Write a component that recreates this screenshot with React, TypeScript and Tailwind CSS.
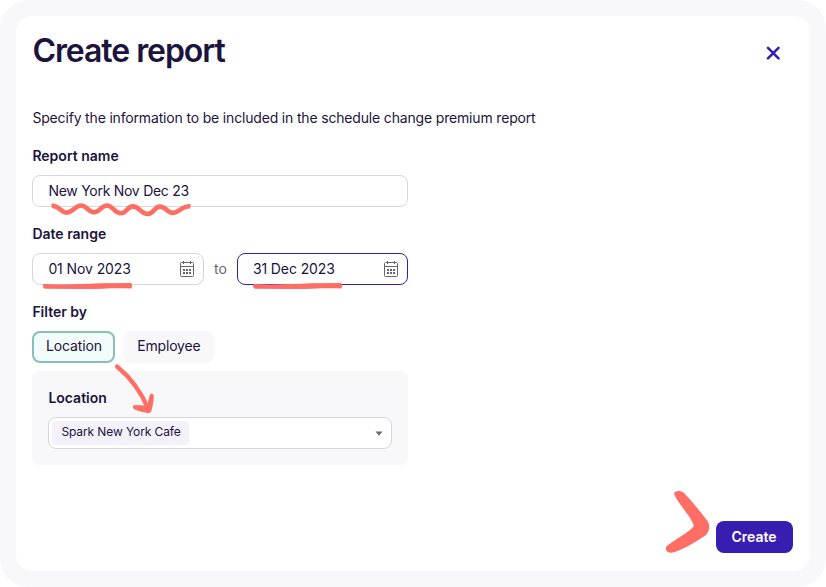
import React from 'react';

interface DateFieldProps {
  value: string;
  active?: boolean;
}

const CalendarIcon: React.FC = () => (
  <svg width="16" height="18" viewBox="0 0 16 18" fill="none" stroke="#66666f" className="mr-2">
    <rect x="1.5" y="2.5" width="13" height="14" rx="1" />
    <path d="M1.5 6.5h13M4.5 1v3M11.5 1v3" />
    <path d="M4 10h2M7 10h2M10 10h2M4 13h2M7 13h2M10 13h2" strokeWidth="2" />
  </svg>
);

const DateField: React.FC<DateFieldProps> = ({ value, active }) => (
  <div
    className={`flex h-8 w-[171.5px] items-center justify-between rounded-lg border bg-white pl-[15px] ${
      active ? 'border-[#371eb0]' : 'border-[#d6d6dc]'
    }`}
  >
    <span className="tracking-[-0.1px]">{value}</span>
    <CalendarIcon />
  </div>
);

// Hand-drawn marks on top of the form
const Annotations: React.FC = () => (
  <svg
    className="pointer-events-none absolute inset-0"
    width="826"
    height="587"
    viewBox="0 0 826 587"
    fill="none"
    stroke="#ff6e64"
    strokeLinecap="round"
    strokeLinejoin="round"
  >
    <path
      strokeWidth="4.6"
      strokeLinecap="butt"
      d="M51.500 206c7-1.500 9 6.600 15.500 6.600c6 0 8-7.100 14-7.100c6 0 7 6.800 13 6.800c6 0 7-6.800 13-6.800c6 0 7 7.700 14 7.700c6 0 6-6.800 12-6.800c6 0 8 7.500 15 7.500c6 0 6-7.300 12-7.300c6 0 7 6.300 13 6.300c6 0 9-7.300 17.500-6.600"
    />
    <path fill="#ff6e64" stroke="none" d="M44 284C60 284.800 80 284.300 100 283.300L131 282.900C132.500 284.300 132.500 287.300 131 288.600C112 287.600 98 289.500 78 289L45 288.700C42.500 287.800 42.500 284.800 44 284Z" />
    <path fill="#ff6e64" stroke="none" d="M254 284C270 284.800 290 284.300 310 283.300L341 282.900C342.500 284.300 342.500 287.300 341 288.600C322 287.600 308 289.500 288 289L255 288.700C252.500 287.800 252.500 284.800 254 284Z" />
    {/* Arrow from the Location tab to the select */}
    <path strokeWidth="4.2" d="M117 366.500c13 10.500 24 25 31.500 43" />
    <path fill="#ff6e64" strokeWidth="1" d="M133.500 406C135 405 140 406 144.500 406L147.500 404.500C149 401 149.500 397 150.500 394.500C151.500 393.500 153 394 153.200 395.500C153.500 401 152 407 150.500 412L148 412.500C143 411.800 137 410.500 134 408.500Z" />
    <path
      fill="#ff6e64"
      stroke="none"
      d="M674.500 495C672.500 490.500 680 490 683.500 492.500C692 501.500 700 511 707.500 521C710 525 710 531 706 535C696 542 685 548.500 674 552.300C669 553.500 665 551.500 666 547.500C668 543 687 534.500 694 526C690 515 680 506 674.500 495Z"
    />
  </svg>
);

export default function App() {
  return (
    <div className="relative flex h-[587px] w-[826px] rounded-[28px] bg-[#f8f8fb] p-4 font-['Inter',sans-serif] text-sm text-[#1c143c]">
      <div className="flex h-[555px] w-[794px] flex-col rounded-2xl bg-white pr-[17.5px] pl-[16.4px] pt-4">
        <div className="flex items-start justify-between">
          <h1 className="mt-px text-[32px] leading-9 font-semibold tracking-[-1.06px]">Create report</h1>
          <button className="mt-3.5 mr-[13px]" aria-label="Close">
            <svg width="14" height="14" viewBox="0 0 14 14" stroke="#371eb0" strokeWidth="2.6" strokeLinecap="round">
              <path d="M2 1.800l10.500 10.500M12.500 1.800L2 12.300" />
            </svg>
          </button>
        </div>

        <p className="mt-[39px] leading-5 tracking-[-0.17px]">
          Specify the information to be included in the schedule change premium report
        </p>

        <div className="w-[376px]">
          <label className="mt-[18px] block leading-5 font-semibold">Report name</label>
          <div className="mt-[9px] flex h-8 items-center rounded-lg border border-[#d6d6dc] pl-[15px] tracking-[-0.27px]">
            New York Nov Dec 23
          </div>

          <label className="mt-[17px] block leading-5 font-semibold">Date range</label>
          <div className="mt-[9px] flex items-center justify-between">
            <DateField value="01 Nov 2023" />
            <span className="text-[#66666f]">to</span>
            <DateField value="31 Dec 2023" active />
          </div>

          <label className="mt-[17px] block leading-5 font-semibold">Filter by</label>
          <div className="mt-[9px] flex gap-2">
            <button className="h-8 w-[83px] rounded-lg border-2 border-[#8bbdb9] bg-[#f2fcfb] pb-0.5 tracking-[-0.15px]">
              Location
            </button>
            <button className="h-8 w-[91px] rounded-lg bg-[#f8f8fb] pb-0.5 tracking-[-0.2px]">Employee</button>
          </div>

          <div className="mt-2 h-[94px] rounded-lg bg-[#f8f8fb] px-4 pt-[17px]">
            <label className="block leading-5 font-semibold">Location</label>
            <div className="mt-[9px] flex h-8 items-center justify-between rounded-lg border border-[#d6d6dc] bg-white pr-2 pl-[3px]">
              <span className="flex h-6 w-[137px] items-center rounded bg-[#f3f1fa] pb-0.5 pl-[9px] text-xs tracking-[-0.1px]">
                Spark New York Cafe
              </span>
              <svg width="8" height="5" viewBox="0 0 8 5" fill="#66666f">
                <path d="M.5.500h7L4 4.800z" />
              </svg>
            </div>
          </div>
        </div>

        <button className="mt-14 h-8 w-[77px] self-end rounded-lg bg-[#371eb0] font-semibold text-white">Create</button>
      </div>

      <Annotations />
    </div>
  );
}
